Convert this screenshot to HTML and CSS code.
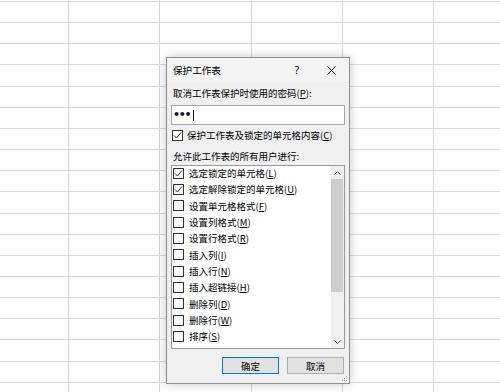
FILE: index.html
```html
<!DOCTYPE html>
<html lang="zh-CN">
<head>
<meta charset="utf-8">
<title>保护工作表</title>
<link rel="stylesheet" href="styles.css">
</head>
<body>
<div class="sheet"></div>
<div class="dialog">
  <div class="titlebar">
    <span class="title">保护工作表</span>
    <span class="help">?</span>
    <span class="close"><svg width="9" height="9" viewBox="0 0 9 9"><path d="M0.5 0.5 L8.5 8.5 M8.5 0.5 L0.5 8.5" stroke="#111" stroke-width="1" fill="none"/></svg></span>
  </div>
  <div class="body">
    <div class="label lbl-pw">取消工作表保护时使用的密码(<u>P</u>):</div>
    <div class="pwbox"><span class="dots">•••</span><span class="caret"></span></div>
    <div class="check-row top-check">
      <span class="box"><svg width="9" height="9" viewBox="0 0 9 9"><path d="M1 4.5 L3.5 7 L8 1.5" stroke="#222" stroke-width="1" fill="none"/></svg></span>
      <span>保护工作表及锁定的单元格内容(<u>C</u>)</span>
    </div>
    <div class="label lbl-allow">允许此工作表的所有用户进行:</div>
    <div class="list">
      <div class="items">
        <div class="item"><span class="box"><svg width="9" height="9" viewBox="0 0 9 9"><path d="M1 4.5 L3.5 7 L8 1.5" stroke="#222" stroke-width="1" fill="none"/></svg></span><span>选定锁定的单元格(<u>L</u>)</span></div>
        <div class="item"><span class="box"><svg width="9" height="9" viewBox="0 0 9 9"><path d="M1 4.5 L3.5 7 L8 1.5" stroke="#222" stroke-width="1" fill="none"/></svg></span><span>选定解除锁定的单元格(<u>U</u>)</span></div>
        <div class="item"><span class="box"></span><span>设置单元格格式(<u>F</u>)</span></div>
        <div class="item"><span class="box"></span><span>设置列格式(<u>M</u>)</span></div>
        <div class="item"><span class="box"></span><span>设置行格式(<u>R</u>)</span></div>
        <div class="item"><span class="box"></span><span>插入列(<u>I</u>)</span></div>
        <div class="item"><span class="box"></span><span>插入行(<u>N</u>)</span></div>
        <div class="item"><span class="box"></span><span>插入超链接(<u>H</u>)</span></div>
        <div class="item"><span class="box"></span><span>删除列(<u>D</u>)</span></div>
        <div class="item"><span class="box"></span><span>删除行(<u>W</u>)</span></div>
        <div class="item"><span class="box"></span><span>排序(<u>S</u>)</span></div>
      </div>
      <div class="scrollbar">
        <div class="arrow"><svg width="7" height="4" viewBox="0 0 7 4"><path d="M0.5 3.5 L3.5 0.5 L6.5 3.5" stroke="#555" stroke-width="1" fill="none"/></svg></div>
        <div class="thumb"></div>
        <div class="track"></div>
        <div class="arrow"><svg width="7" height="4" viewBox="0 0 7 4"><path d="M0.5 0.5 L3.5 3.5 L6.5 0.5" stroke="#555" stroke-width="1" fill="none"/></svg></div>
      </div>
    </div>
    <div class="buttons">
      <div class="btn btn-default">确定</div>
      <div class="btn">取消</div>
    </div>
  </div>
  <svg class="grip" width="5" height="5" viewBox="0 0 5 5"><rect x="4" y="0" width="1" height="1" fill="#a0a0a0"/><rect x="2" y="2" width="1" height="1" fill="#a0a0a0"/><rect x="4" y="2" width="1" height="1" fill="#a0a0a0"/><rect x="0" y="4" width="1" height="1" fill="#a0a0a0"/><rect x="2" y="4" width="1" height="1" fill="#a0a0a0"/><rect x="4" y="4" width="1" height="1" fill="#a0a0a0"/></svg>
</div>
</body>
</html>
```

FILE: styles.css
```css
html, body {
  margin: 0;
  padding: 0;
  width: 500px;
  height: 392px;
  overflow: hidden;
  background: #ffffff;
  font-family: "Noto Sans CJK SC", "Noto Sans", sans-serif;
}

.sheet {
  width: 500px;
  height: 392px;
  background-image:
    repeating-linear-gradient(to bottom, transparent 0 1px, #dadada 1px 2px, transparent 2px 21.15px),
    repeating-linear-gradient(to right, transparent 0 68px, #d6d6d6 68px 69px, transparent 69px 91.3px);
}

.dialog {
  position: absolute;
  left: 166px;
  top: 57px;
  width: 184px;
  height: 327px;
  box-sizing: border-box;
  border: 1px solid #8e8e8e;
  background: #f0f0f0;
  box-shadow: 0 0 10px rgba(0, 0, 0, 0.22);
  display: flex;
  flex-direction: column;
  font-size: 9.5px;
  color: #000000;
}

.titlebar {
  height: 24px;
  display: flex;
  align-items: center;
  background: #f3f3f3;
}

.title {
  flex: 1;
  padding-left: 6px;
  font-size: 9.6px;
  line-height: 24px;
}

.help {
  width: 32px;
  text-align: center;
  font-family: "Noto Sans", sans-serif;
  font-size: 10px;
  line-height: 24px;
}

.close {
  width: 36px;
  height: 24px;
  display: flex;
  align-items: center;
  justify-content: center;
}

.body {
  flex: 1;
  padding: 0 4px;
  display: flex;
  flex-direction: column;
}

.label {
  line-height: 14px;
  padding-left: 2px;
  white-space: nowrap;
}

.lbl-pw { margin-top: 4px; }
.lbl-allow { margin-top: 7px; }

.pwbox {
  margin-top: 5px;
  height: 20px;
  box-sizing: border-box;
  border: 1px solid #a6a6a6;
  background: #ffffff;
  display: flex;
  align-items: center;
  padding-left: 1px;
}

.dots {
  font-family: "DejaVu Sans", sans-serif;
  font-size: 11px;
  font-weight: bold;
  letter-spacing: -1.3px;
  color: #111;
  line-height: 12px;
}

.caret {
  width: 1px;
  height: 11px;
  background: #111;
  margin-left: 3px;
}

.check-row {
  display: flex;
  align-items: center;
  line-height: 14px;
  white-space: nowrap;
}

.top-check {
  margin-top: 3px;
  padding-left: 1px;
}

.box {
  width: 11px;
  height: 11px;
  box-sizing: border-box;
  border: 1px solid #333333;
  background: #ffffff;
  margin-right: 4px;
  display: flex;
  align-items: center;
  justify-content: center;
  flex: none;
}

.list {
  margin-top: 2px;
  height: 184px;
  box-sizing: border-box;
  border: 1px solid #9a9a9a;
  background: #ffffff;
  display: flex;
  overflow: hidden;
}

.items {
  flex: 1;
  margin-top: -1px;
}

.item {
  height: 16.33px;
  display: flex;
  align-items: center;
  padding-left: 1px;
  white-space: nowrap;
}

.item .box {
  margin-right: 5px;
}

.scrollbar {
  width: 13px;
  background: #f0f0f0;
  display: flex;
  flex-direction: column;
}

.arrow {
  height: 13px;
  display: flex;
  align-items: center;
  justify-content: center;
  flex: none;
}

.thumb {
  height: 113px;
  margin-right: 1px;
  background: #cdcdcd;
  flex: none;
}

.track {
  flex: 1;
}

.buttons {
  margin-top: 8px;
  display: flex;
  justify-content: flex-end;
  gap: 8px;
  padding-right: 1px;
}

.btn {
  width: 57px;
  height: 17px;
  box-sizing: border-box;
  border: 1px solid #adadad;
  background: #e1e1e1;
  display: flex;
  align-items: center;
  justify-content: center;
  font-size: 9.5px;
}

.btn-default {
  border-color: #0078d7;
}

.grip {
  position: absolute;
  right: 2px;
  bottom: 2px;
}
```
